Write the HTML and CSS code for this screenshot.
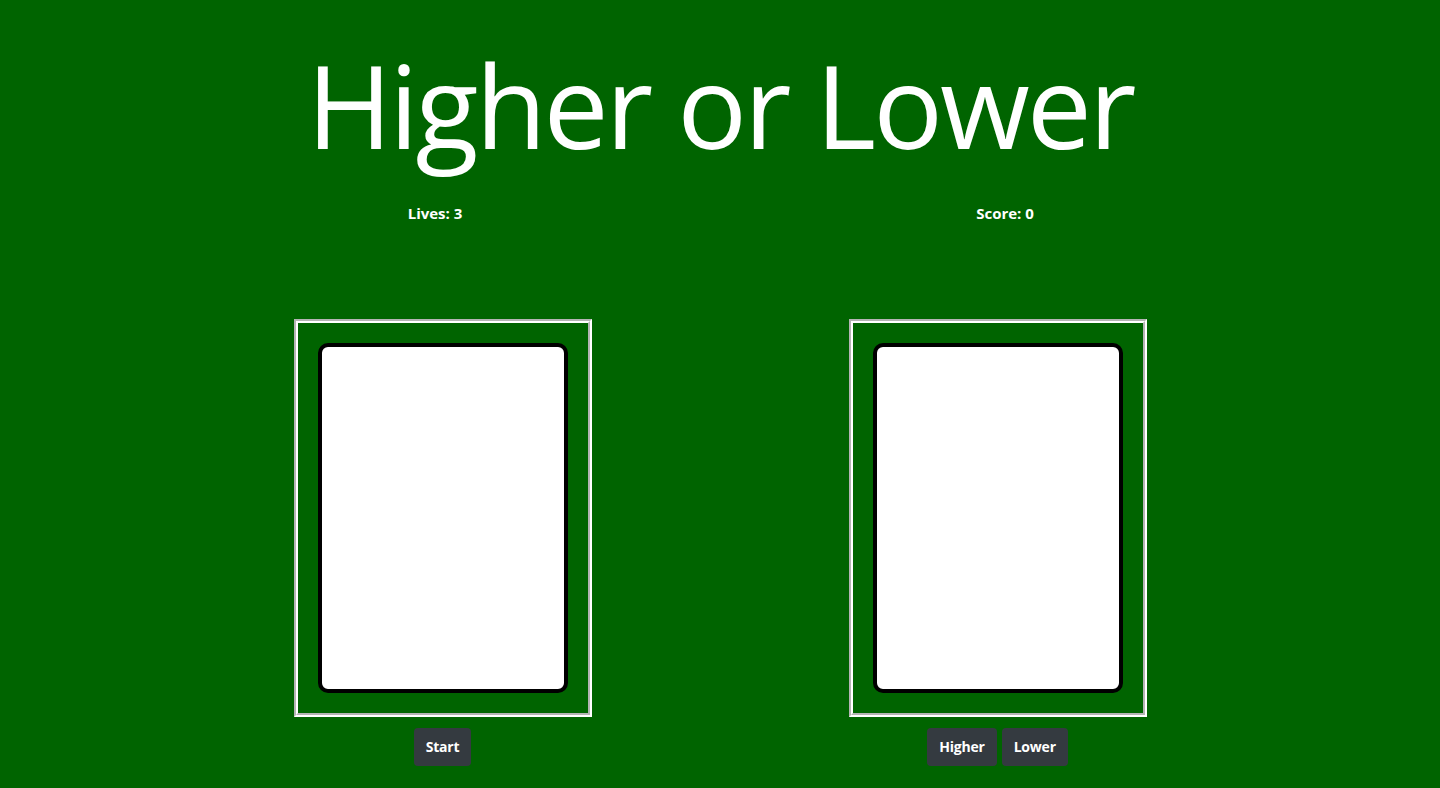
FILE: index.html
```html
<!DOCTYPE html>
<html lang="en">
<head>
<meta charset="utf-8">
<title>Higher or Lower</title>
<link rel="stylesheet" href="styles.css">
</head>
<body>
<div class="container">
  <h1 class="title">Higher or Lower</h1>
  <div class="stats">
    <div class="stat">Lives: 3</div>
    <div class="stat">Score: 0</div>
  </div>
  <div class="table">
    <div class="slot">
      <div class="frame"><div class="frame-inner"><div class="card"></div></div></div>
      <div class="controls"><button class="btn">Start</button></div>
    </div>
    <div class="slot">
      <div class="frame"><div class="frame-inner"><div class="card"></div></div></div>
      <div class="controls"><button class="btn">Higher</button><button class="btn">Lower</button></div>
    </div>
  </div>
</div>
</body>
</html>
```
FILE: styles.css
```css
html, body {
  margin: 0;
  padding: 0;
}
body {
  background: #006400;
  color: #fff;
  font-family: "Open Sans", "Noto Sans", sans-serif;
  height: 788px;
  overflow: hidden;
}
.container {
  width: 1110px;
  margin: 0 auto;
}
.title {
  margin: 0;
  padding-top: 34px;
  font-size: 116px;
  font-weight: 400;
  line-height: 140px;
  text-align: center;
  letter-spacing: -3px;
}
.stats {
  display: grid;
  grid-template-columns: 1fr 1fr;
  margin: 29px -15px 0;
}
.stat {
  text-align: center;
  font-weight: 700;
  font-size: 15px;
  line-height: 20px;
}
.table {
  display: flex;
  justify-content: space-around;
  margin-top: 96px;
}
.slot {
  display: flex;
  flex-direction: column;
  align-items: center;
}
.frame {
  border: 2px solid;
  border-color: #b4b4b4 #fff #fff #b4b4b4;
}
.frame-inner {
  border: 2px solid;
  border-color: #fff #b4b4b4 #b4b4b4 #fff;
  padding: 20px;
}
.card {
  width: 242px;
  height: 342px;
  background: #fff;
  border: 4px solid #000;
  border-radius: 10px;
}
.controls {
  display: flex;
  gap: 5px;
  margin-top: 11px;
}
.btn {
  font-family: "Open Sans", "Noto Sans", sans-serif;
  font-weight: 700;
  font-size: 14px;
  line-height: 22px;
  height: 38px;
  padding: 8px 12px;
  color: #fff;
  background: #343a40;
  border: 0;
  border-radius: 4px;
  letter-spacing: -0.2px;
}
```
